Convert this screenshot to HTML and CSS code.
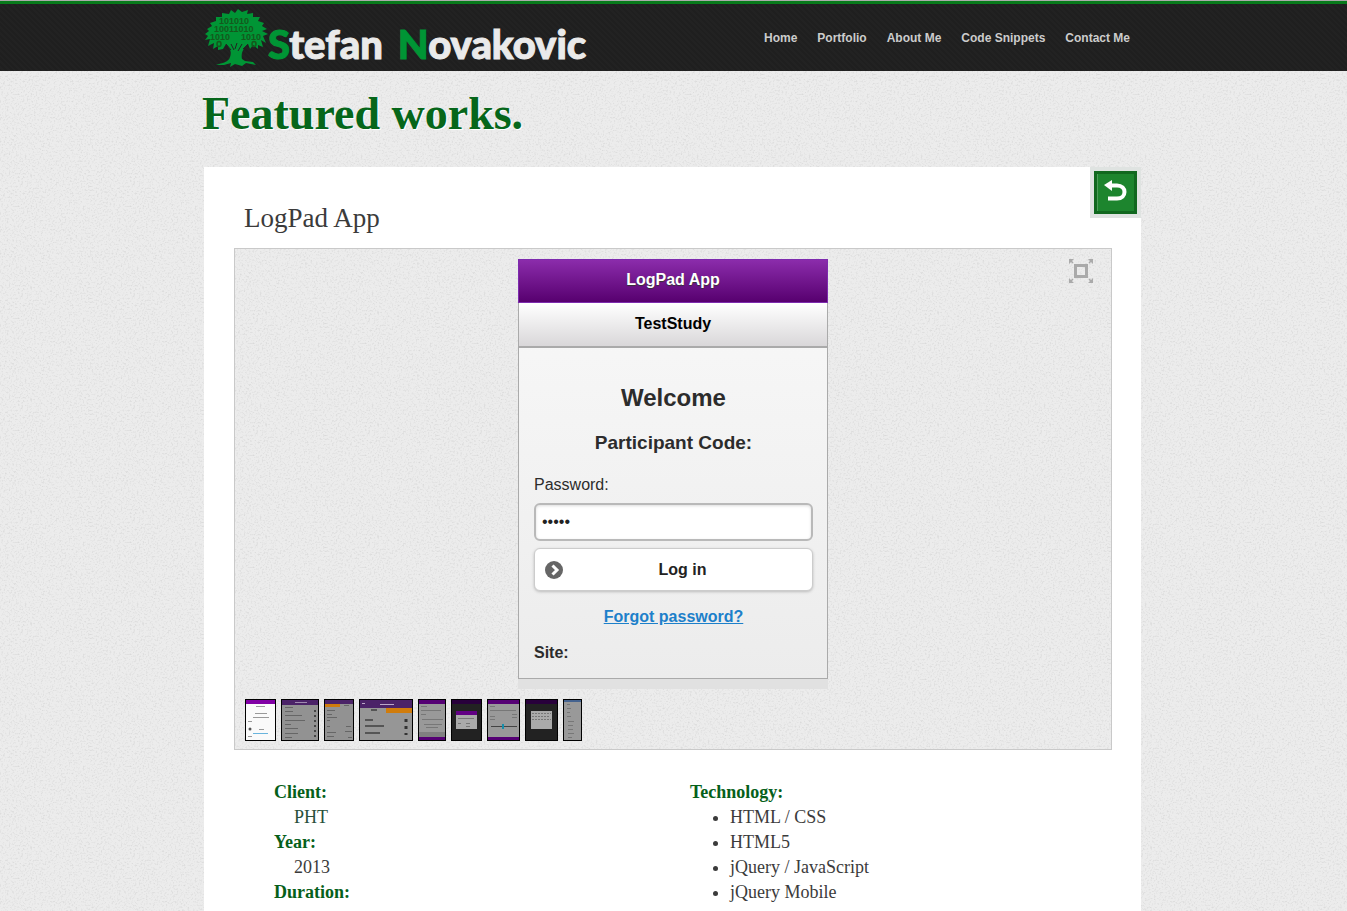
FILE: index.html
```html
<!DOCTYPE html>
<html lang="en">
<head>
<meta charset="utf-8">
<title>Stefan Novakovic - LogPad App</title>
<link rel="stylesheet" href="styles.css">
</head>
<body>
<header class="site-header">
  <div class="page header-inner">
    <a class="logo" href="#">
      <svg class="tree" viewBox="0 0 64 58" aria-hidden="true">
        <path fill="#009535" d="M1 25 5 22 3 20 8 17 6 14 12 12 12 8 18 8 18 4 25 5 27 1 31 4 34 0 38 3 44 1 43 5 49 4 49 8 56 8 54 12 60 14 58 17 63 20 58 22 64 25 59 27 62 34 57 31 59 38 54 36 54 40 49 36 46 40 44 35C38 40 37 46 38 50L41 52 49 53 52 56 42 54 38 57 31 55 26 58 27 54 20 56 12 56C18 54 25 53 26 48 28 43 26 39 22 35L19 40 14 41 14 37 9 40 10 34 4 37 6 30 1 31 4 27Z"/>
        <path stroke="#222" stroke-width="1" fill="none" d="M27 35 30 41M33 34 31 40M38 35 34 42M22 35 27 41M44 35 39 40"/>
        <g class="bits"><text x="15" y="15">101010</text><text x="10" y="23">10011010</text><text x="6" y="31">1010</text><text x="37" y="31">1010</text></g>
        <g fill="none" stroke="#14591c" stroke-width="1.500"><ellipse cx="15" cy="35" rx="2" ry="2.500"/><ellipse cx="50" cy="35" rx="2" ry="2.500"/></g>
      </svg>
      <span class="logo-text"><span class="initial">S</span>tefan</span>
      <span class="logo-text second"><span class="initial">N</span>ovakovic</span>
    </a>
    <nav class="nav">
      <a href="#">Home</a><a href="#">Portfolio</a><a href="#">About Me</a><a href="#">Code Snippets</a><a href="#">Contact Me</a>
    </nav>
  </div>
</header>
<main class="page">
  <h1>Featured works.</h1>
  <article class="card">
    <button class="back" aria-label="Back"><svg viewBox="0 0 43 43"><path fill="none" stroke="#11681f" stroke-width="3" d="M1.500 1.500H41.500V41.500H1.500Z"/><path fill="none" stroke="#4c9c58" d="M3.500 3V40"/><path fill="#fff" d="M10 14 18 9V20Z"/><path fill="none" stroke="#fff" stroke-width="4" d="M17 14.500H23C33 14.500 33 27.500 23 27.500H14"/></svg></button>
    <h2>LogPad App</h2>
    <section class="gallery">
      <button class="expand" aria-label="Full screen"><svg viewBox="0 0 24 24"><rect x="6.500" y="6.500" width="11" height="11" fill="none" stroke="#aaa" stroke-width="3"/><path fill="#aaa" d="M0 0H5L0 5ZM24 0V5L19 0ZM0 24V19L5 24ZM24 24H19L24 19Z"/><path stroke="#aaa" stroke-width="1.500" d="M1 1 4 4M23 1 20 4M1 23 4 20M23 23 20 20"/></svg></button>
      <form class="phone">
        <div class="phone-title">LogPad App</div>
        <div class="phone-study">TestStudy</div>
        <div class="phone-body">
          <h3>Welcome</h3>
          <h4>Participant Code:</h4>
          <label for="pw">Password:</label>
          <input id="pw" type="password" value="12345">
          <button class="login" type="button"><svg viewBox="0 0 18 18"><circle cx="9" cy="9" r="9" fill="#666"/><path d="M7.500 4.500 12 9 7.500 13.500" fill="none" stroke="#fff" stroke-width="3"/></svg>Log in</button>
          <a class="forgot" href="#">Forgot password?</a>
          <strong class="site">Site:</strong>
        </div>
      </form>
      <div class="thumbs">
        <svg width="31" height="42"><rect width="31" height="42" fill="#fafafa"/><path fill="#8100a5" d="M0 0H31V5H0Z"/><path stroke="#999" d="M11 7.500H20M10 14.500H22M8 18.500H24M3 22.500H7M14 30.500H19M3 37.500H7"/><path stroke="#69b4dd" d="M8 34.500H23"/><circle cx="5" cy="30" r="1.500" fill="#555"/><rect class="frame" x=".5" y=".5" width="30" height="41"/></svg>
        <svg width="38" height="42"><rect width="38" height="42" fill="#929292"/><path fill="#4b2368" d="M0 0H38V6H0Z"/><path stroke="#a08bb0" d="M14 3.500H26"/><path stroke="#666" d="M4 8.500H12M4 12.500H12M4 16.500H21M4 21.500H24M4 25.500H10M4 29.500H17M4 34.500H17M4 38.500H11"/><path stroke="#444" stroke-width="2" stroke-dasharray="2 3" d="M34 11V39"/><rect class="frame" x=".5" y=".5" width="37" height="41"/></svg>
        <svg width="30" height="42"><rect width="30" height="42" fill="#929292"/><path fill="#4b2368" d="M0 0H30V5H0Z"/><path fill="#d07c0c" d="M1 5H16V8H1Z"/><path stroke="#666" d="M20 6.500H25M3 11.500H11M3 15.500H8M3 18.500H13M3 21.500H6M3 27.500H6M22 27.500H27M3 33.500H12M21 32.500H28M3 37.500H10M24 38.500H28"/><rect class="frame" x=".5" y=".5" width="29" height="41"/></svg>
        <svg width="54" height="42"><rect width="54" height="42" fill="#969696"/><path fill="#4b2368" d="M0 0H54V9H0Z"/><path fill="#d07c0c" d="M27 9H54V14H27Z"/><path stroke="#bba8c8" d="M21 5.500H35M3 4.500H6"/><path stroke="#555" stroke-width="2" d="M12 11H18M6 21H14M6 27H25M6 34H21"/><path stroke="#333" stroke-width="3" stroke-dasharray="3 4" d="M47 20V36"/><rect class="frame" x=".5" y=".5" width="53" height="41"/></svg>
        <svg width="28" height="42"><rect width="28" height="42" fill="#999"/><path fill="#550074" d="M0 0H28V5H0ZM0 38H28V42H0Z"/><path stroke="#777" d="M3 7.500H9M3 11.500H23M3 15.500H8M4 20.500H25M6 25.500H24M8 28.500H20"/><path fill="#808080" d="M1 33H27V38H1Z"/><rect class="frame" x=".5" y=".5" width="27" height="41"/></svg>
        <svg width="31" height="42"><rect width="31" height="42" fill="#222"/><path fill="#28003b" d="M0 0H31V5H0Z"/><rect x="5" y="12" width="21" height="18" fill="#aaa"/><path fill="#620084" d="M5 12H26V16H5Z"/><path stroke="#777" d="M7 19.500H23M7 24.500H10M15 24.500H19M15 27.500H19"/><rect class="frame" x=".5" y=".5" width="30" height="41"/></svg>
        <svg width="33" height="42"><rect width="33" height="42" fill="#999"/><path fill="#550074" d="M0 0H33V5H0ZM0 38H33V42H0Z"/><path stroke="#777" d="M3 7.500H8M3 11.500H29M3 17.500H8M3 20.500H8M25 15.500H30M25 18.500H30"/><path stroke="#444" d="M4 27.500H30"/><path stroke="#168eab" stroke-width="2" d="M16 25V30"/><rect class="frame" x=".5" y=".5" width="32" height="41"/></svg>
        <svg width="33" height="42"><rect width="33" height="42" fill="#222"/><path fill="#28003b" d="M0 0H33V5H0Z"/><rect x="6" y="12" width="21" height="18" fill="#aaa"/><path stroke="#777" stroke-dasharray="2 1" d="M7 14.500H26M7 17.500H24M7 20.500H26"/><rect class="frame" x=".5" y=".5" width="32" height="41"/></svg>
        <svg width="19" height="42"><rect width="19" height="42" fill="#999"/><path fill="#45638f" d="M0 0H19V3H0Z"/><path stroke="#777" d="M4 5.500H7M4 9.500H8M4 13.500H7M4 17.500H8M5 22.500H11M5 26.500H10M5 30.500H10M5 34.500H11M5 38.500H9"/><rect class="frame" x=".5" y=".5" width="18" height="41"/></svg>
      </div>
    </section>
    <div class="details">
      <dl><dt>Client:</dt><dd class="client">PHT</dd><dt>Year:</dt><dd>2013</dd><dt>Duration:</dt></dl>
      <div><strong>Technology:</strong><ul><li>HTML / CSS</li><li>HTML5</li><li>jQuery / JavaScript</li><li>jQuery Mobile</li></ul></div>
    </div>
  </article>
</main>
</body>
</html>
```
FILE: styles.css
```css
* { box-sizing: border-box; }
body, .gallery {
  background: #ececec url("data:image/svg+xml,%3Csvg xmlns='http://www.w3.org/2000/svg' width='112' height='112'%3E%3Cfilter id='n' x='0' y='0' width='100%25' height='100%25'%3E%3CfeTurbulence type='fractalNoise' baseFrequency='.55' numOctaves='2' stitchTiles='stitch'/%3E%3CfeColorMatrix values='0 0 0 0 .5 0 0 0 0 .5 0 0 0 0 .5 1 0 0 0 -.49'/%3E%3C/filter%3E%3Crect width='112' height='112' filter='url(%23n)'/%3E%3C/svg%3E");
}
body { margin: 0; min-height: 100vh; color: #3b3b3b; font-family: "Liberation Serif", serif; }
h1, h2, h3, h4, dl, dd, ul { margin: 0; padding: 0; }
button { padding: 0; border: 0; background: none; cursor: pointer; }
svg { display: block; }
.page { max-width: 939px; margin: 0 auto; padding-right: 2px; }
.site-header {
  border-top: 1px solid #aaa;
  background: repeating-linear-gradient(45deg, #1f1f1f 0 2px, #222 2px 4px);
  box-shadow: inset 0 3px #087a1b;
}
.header-inner { display: flex; justify-content: space-between; align-items: center; height: 70px; }
.logo { display: flex; align-items: center; color: #eaeaea; text-decoration: none; }
.tree { width: 64px; height: 58px; margin-top: 4px; }
.bits { font: bold 9px "Liberation Sans", sans-serif; fill: #14591c; }
.logo-text { padding-top: 16px; font: 900 40px/48px Lato, sans-serif; -webkit-text-stroke: 1px currentColor; }
.second { margin-left: 15px; }
.initial { color: #009535; }
.nav { display: flex; gap: 20px; margin-right: 11px; padding-top: 3px; }
.nav a { color: #ccc; font: bold 12px/16px "Liberation Sans", Arial, sans-serif; text-decoration: none; }
h1 { margin-left: -2px; padding: 15px 0 25px; color: #06661a; font-size: 46px; line-height: 56px; text-shadow: 1px 1px #fff; }
.card { position: relative; min-height: 760px; padding: 31px 29px 8px 30px; background: #fff; }
.back { position: absolute; top: 0; right: 0; padding: 4px; background: #dfe3e1; }
.back svg { width: 43px; height: 43px; background: #1d852e; }
h2 { padding: 0 10px 10px; font-size: 27px; font-weight: 400; line-height: 40px; }
.gallery { position: relative; padding: 10px 10px 8px; border: 1px solid #c9c9c9; }
.expand { position: absolute; top: 10px; right: 18px; }
.expand svg { width: 24px; height: 24px; }
.phone {
  width: 310px; margin: 0 auto; color: #2c2c2c; background: linear-gradient(#f9f9f9, #ececec);
  border: 1px solid #aaa; border-top: 0; box-shadow: 0 10px #e1e1e1;
  font: 16px/20px "Liberation Sans", Arial, sans-serif;
}
.phone-title, .phone-study { text-align: center; font-weight: bold; }
.phone-title {
  height: 44px; margin: 0 -1px; border: 1px solid #7d2bae; color: #fff; line-height: 40px;
  background: linear-gradient(#8b2cab, #57006f); text-shadow: 0 1px 1px #333;
}
.phone-study { height: 45px; line-height: 42px; border-bottom: 2px solid #aaa; color: #000; background: linear-gradient(#fff, #d9d7d9); }
.phone-body { display: flex; flex-direction: column; padding: 35px 14px 15px 15px; }
h3 { font-size: 24px; line-height: 30px; text-align: center; }
h4 { padding: 17px 0 19px; font-size: 19px; line-height: 26px; text-align: center; }
.phone-body input {
  width: 100%; height: 38px; margin: 8px 0 7px; padding: 0 6px; border: 2px solid #b9b9b9; border-radius: 6px;
  background: #fff; color: #222; font: 16px "Liberation Sans", Arial, sans-serif; box-shadow: inset 0 1px 3px #ddd;
}
.login {
  display: grid; grid-template-columns: 18px 1fr; align-items: center; height: 43px; padding: 0 10px;
  border: 1px solid #ccc; border-radius: 6px; background: #fff; color: #222;
  font: bold 16px "Liberation Sans", Arial, sans-serif; box-shadow: 0 1px 3px #bbb;
}
.forgot { align-self: center; margin: 16px 0; color: #1d80ca; font-weight: bold; }
.thumbs { display: flex; gap: 5px; padding-top: 20px; }
.frame { fill: none; stroke: #000; }
.details { display: grid; grid-template-columns: 416px 1fr; padding: 30px 0 0 40px; font-size: 18px; line-height: 25px; }
dt, .details strong { color: #06601a; font-weight: bold; }
dd { padding-left: 20px; }
.client { color: #28503a; }
.details ul { padding-left: 40px; }
```
